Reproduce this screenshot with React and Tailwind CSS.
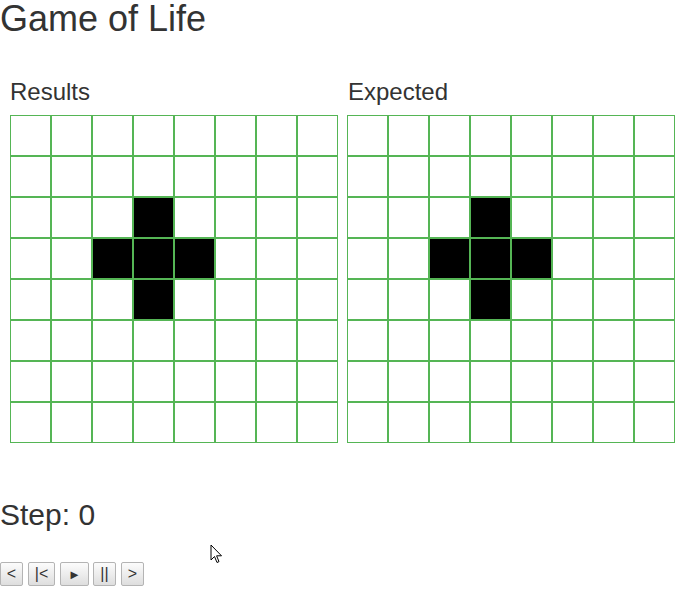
import React from "react";

const alive = new Set(["2-3", "3-2", "3-3", "3-4", "4-3"]);

function Grid() {
  const cells = [];
  for (let r = 0; r < 8; r++) {
    for (let c = 0; c < 8; c++) {
      const on = alive.has(`${r}-${c}`);
      cells.push(
        <div
          key={`${r}-${c}`}
          className={`border border-[#55b555] ${on ? "bg-black" : "bg-white"}`}
        />
      );
    }
  }
  return (
    <div className="grid grid-cols-8 grid-rows-8 w-[328px] h-[328px]">{cells}</div>
  );
}

function Btn({ children, w, ml }) {
  return (
    <button
      className={`${w} ${ml} h-[24px] flex items-center justify-center border border-[#b4b4b4] rounded-[2px] bg-gradient-to-b from-[#fcfcfc] to-[#dedede] text-[16px] text-[#333] leading-none`}
    >
      {children}
    </button>
  );
}

export default function App() {
  return (
    <div
      className="relative w-[694px] h-[592px] bg-white text-[#333] overflow-hidden"
      style={{ fontFamily: '"Liberation Sans", Arial, sans-serif' }}
    >
      <h1 className="text-[36px] leading-[38px] m-0 font-normal">Game of Life</h1>
      <div className="flex mt-[41px] ml-[10px] gap-[9px]">
        <div className="flex flex-col">
          <div className="text-[24px] leading-[26px] mb-[10px]">Results</div>
          <Grid />
        </div>
        <div className="flex flex-col">
          <div className="text-[24px] leading-[26px] mb-[10px] ml-[1px]">Expected</div>
          <Grid />
        </div>
      </div>
      <div className="text-[30px] leading-[33px] mt-[55px]">Step: 0</div>
      <div className="flex mt-[31px]">
        <Btn w="w-[23px]" ml="ml-0">&lt;</Btn>
        <Btn w="w-[27px]" ml="ml-[5px]">|&lt;</Btn>
        <Btn w="w-[29px]" ml="ml-[5px]"><span className="text-[13px]">►</span></Btn>
        <Btn w="w-[23px]" ml="ml-[4px]">||</Btn>
        <Btn w="w-[23px]" ml="ml-[5px]">&gt;</Btn>
      </div>
      <svg
        className="absolute left-[210px] top-[544px]"
        width="13"
        height="20"
        viewBox="0 0 13 20"
      >
        <path
          d="M1 1 L1 16 L4.5 12.5 L7 18.5 L9 17.6 L6.6 11.8 L11.5 11.8 Z"
          fill="white"
          stroke="black"
          strokeWidth="1"
          strokeLinejoin="round"
        />
      </svg>
    </div>
  );
}
